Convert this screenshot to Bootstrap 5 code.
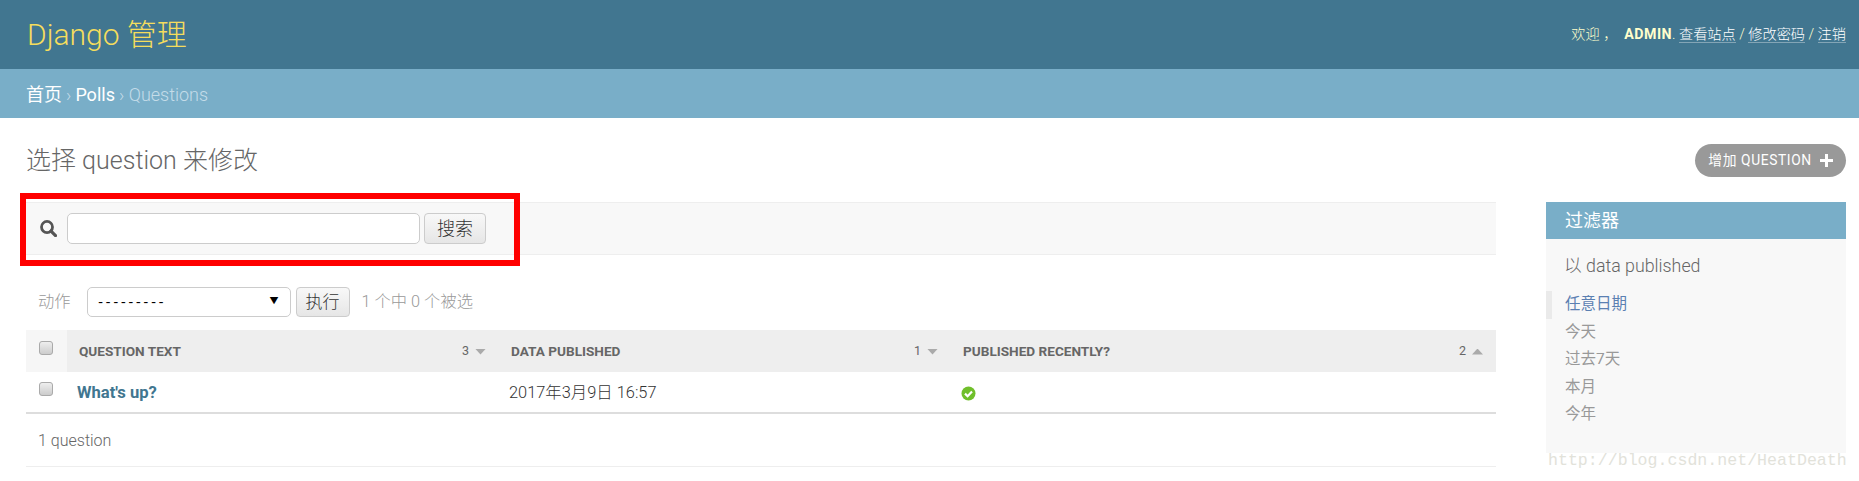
<!DOCTYPE html>
<html lang="zh"><head><meta charset="utf-8"><title>Django 管理</title>
<link href="https://cdn.jsdelivr.net/npm/bootstrap@5.3.0/dist/css/bootstrap.min.css" rel="stylesheet">
<style>
html,body{height:481px;overflow:hidden}
body{position:relative;font-family:Roboto,"Noto Sans CJK SC",sans-serif;font-weight:300;color:#333;background:#fff;font-size:16px}
a{text-decoration:none}
.dj-head{height:69px;background:#417690;padding:0 13px 0 27px}
.dj-brand{font-size:30px;color:#f5dd5d;font-weight:300;line-height:69px}
.dj-user{font-size:14.2px;color:#ffc;font-weight:300;white-space:pre}
.dj-user strong{font-weight:700;letter-spacing:.5px}
.dj-user a{color:#fff;border-bottom:1px solid rgba(255,255,255,.35)}
.dj-crumb{height:49px;background:#79aec8;padding:1px 0 0 26px;color:#c4dce8;font-size:18px}
.dj-crumb a{color:#fff;font-weight:400}
.dj-main{padding:0 13px 0 26px}
.dj-titlebar{height:84px;padding-top:25px}
.dj-title{font-size:25px;font-weight:300;color:#666;margin:0;line-height:36px}
.dj-add{height:33px;width:151px;background:#999;color:#fff;border-radius:17px;font-size:13.8px;font-weight:400;letter-spacing:.6px;margin-top:1px}
.dj-list{width:1470px}
.dj-search{height:53px;background:#f8f8f8;border-top:1px solid #eee;border-bottom:1px solid #eee;padding-left:14px}
.dj-input{width:353px;height:31px;border:1px solid #ccc;border-radius:5px;background:#fff;margin:0 4px 0 10px;padding:0}
.dj-btn{border:1px solid #ccc;border-radius:4px;background:linear-gradient(#f8f8f8,#e6e6e6);color:#333;font-size:18px;font-weight:300;padding:0;height:31px;line-height:1}
.dj-actions{height:75px;padding:32px 0 13px 12px;font-size:16.3px;color:#999}
.dj-select{width:204px;height:30px;border:1px solid #ccc;border-radius:5px;background:#fff;margin:0 5px 0 16px;padding:0 11px;color:#000;font-size:15px;font-weight:400;letter-spacing:3.4px}
.dj-caret{font-size:9px;color:#000;letter-spacing:0}
.dj-table{margin:0;width:1470px;table-layout:fixed;border-collapse:collapse}
.dj-table th{height:42px;background:#eee;padding:0;vertical-align:middle;color:#666;font-size:13.6px;font-weight:700;text-transform:uppercase;border:0}
.dj-table th.dj-chk{background:#f6f6f6}
.dj-table td{height:41px;padding:0;vertical-align:middle;border:0;border-bottom:2px solid #ddd;font-size:16.4px;font-weight:300;color:#333}
.dj-table td a{color:#417690;font-weight:700;font-size:16.6px}
.dj-box{display:block;width:14px;height:14px;border:1px solid #aaa;border-radius:3px;background:linear-gradient(#eee,#ccc);margin:-6px 0 0 13px}
.dj-th{padding:0 13px 0 12px}
.dj-sortn{font-weight:400;color:#666;font-size:12.5px}
.dj-tri{display:inline-block;width:11px;height:6px;background:#aaa;margin-left:6px;clip-path:polygon(0 0,100% 0,50% 100%)}
.dj-tri.dj-up{clip-path:polygon(0 100%,100% 100%,50% 0)}
.dj-rowcell{padding:2px 0 0 10px!important}
.dj-count{height:53px;border-bottom:1px solid #eee;padding:2px 0 0 12px;color:#666;font-size:16px}
.dj-filter{width:300px;height:251px;background:#f8f8f8}
.dj-fhead{height:37px;background:#79aec8;color:#fff;font-size:18px;font-weight:400;padding-left:19px}
.dj-fsub{height:52px;padding:11px 0 0 18px;font-size:17.8px;color:#666;font-weight:300;line-height:32px}
.dj-fitem{height:27.5px;padding-left:19px;font-size:15.5px;color:#999;font-weight:400;line-height:27.5px}
.dj-fitem.dj-on{color:#5b80b2;border-left:6px solid #eaeaea;padding-left:13px}
.dj-red{position:absolute;left:20px;top:193px;width:500px;height:73px;border:6px solid #f00;pointer-events:none}
.dj-mark{position:absolute;left:1548px;top:450px;font-family:"Liberation Mono",monospace;font-size:16.6px;color:#e2e2da;line-height:22px}
</style></head><body>
<header class="dj-head d-flex justify-content-between align-items-center">
  <div class="dj-brand">Django 管理</div>
  <div class="dj-user">欢迎 ，  <strong>ADMIN</strong>. <a href="#">查看站点</a> / <a href="#">修改密码</a> / <a href="#">注销</a></div>
</header>
<nav class="dj-crumb d-flex align-items-center gap-1"><a href="#">首页</a> › <a href="#">Polls</a> › Questions</nav>
<main class="dj-main">
  <div class="dj-titlebar d-flex justify-content-between align-items-start">
    <h1 class="dj-title">选择 question 来修改</h1>
    <a class="dj-add d-flex align-items-center justify-content-center gap-2" href="#">增加 QUESTION
      <svg width="13" height="13" viewBox="0 0 13 13"><path d="M5 0h3v5h5v3H8v5H5V8H0V5h5z" fill="#fff"/></svg></a>
  </div>
  <div class="d-flex justify-content-between align-items-start">
    <section class="dj-list">
      <div class="dj-search d-flex align-items-center">
        <svg width="17" height="17" viewBox="0 0 16 16"><circle cx="6.6" cy="6.6" r="5.2" fill="none" stroke="#555" stroke-width="2.6"/><path d="M10.4 10.4l4.2 4.2" stroke="#555" stroke-width="3" stroke-linecap="round"/></svg>
        <input class="dj-input" type="text" aria-label="搜索">
        <button class="dj-btn" style="width:62px">搜索</button>
      </div>
      <div class="dj-actions d-flex align-items-center">
        <span>动作</span>
        <div class="dj-select d-flex align-items-center justify-content-between"><span>---------</span><span class="dj-caret">▼</span></div>
        <button class="dj-btn" style="width:54px;height:30px;font-size:17px">执行</button>
        <span class="ms-2 ps-1">1 个中 0 个被选</span>
      </div>
      <table class="table dj-table">
        <colgroup><col style="width:41px"><col style="width:432px"><col style="width:452px"><col></colgroup>
        <thead><tr>
          <th class="dj-chk"><span class="dj-box"></span></th>
          <th><div class="dj-th d-flex justify-content-between align-items-center"><span>Question text</span><span class="dj-sortn">3<i class="dj-tri"></i></span></div></th>
          <th><div class="dj-th d-flex justify-content-between align-items-center"><span>Data published</span><span class="dj-sortn">1<i class="dj-tri"></i></span></div></th>
          <th><div class="dj-th d-flex justify-content-between align-items-center"><span>Published recently?</span><span class="dj-sortn">2<i class="dj-tri dj-up"></i></span></div></th>
        </tr></thead>
        <tbody><tr>
          <td><span class="dj-box"></span></td>
          <td class="dj-rowcell"><a href="#">What's up?</a></td>
          <td class="dj-rowcell"><span>2017年3月9日 16:57</span></td>
          <td class="dj-rowcell"><svg width="15" height="15" viewBox="0 0 15 15"><circle cx="7.5" cy="7.5" r="7" fill="#70bf2b"/><path d="M4 7.6l2.6 2.6L11 5.6" fill="none" stroke="#fff" stroke-width="2.2"/></svg></td>
        </tr></tbody>
      </table>
      <div class="dj-count d-flex align-items-center">1 question</div>
    </section>
    <aside class="dj-filter">
      <div class="dj-fhead d-flex align-items-center">过滤器</div>
      <div class="dj-fsub">以 data published</div>
      <div class="dj-fitem dj-on">任意日期</div>
      <div class="dj-fitem">今天</div>
      <div class="dj-fitem">过去7天</div>
      <div class="dj-fitem">本月</div>
      <div class="dj-fitem">今年</div>
    </aside>
  </div>
</main>
<div class="dj-red"></div>
<div class="dj-mark">http://blog.csdn.net/HeatDeath</div>
</body></html>
